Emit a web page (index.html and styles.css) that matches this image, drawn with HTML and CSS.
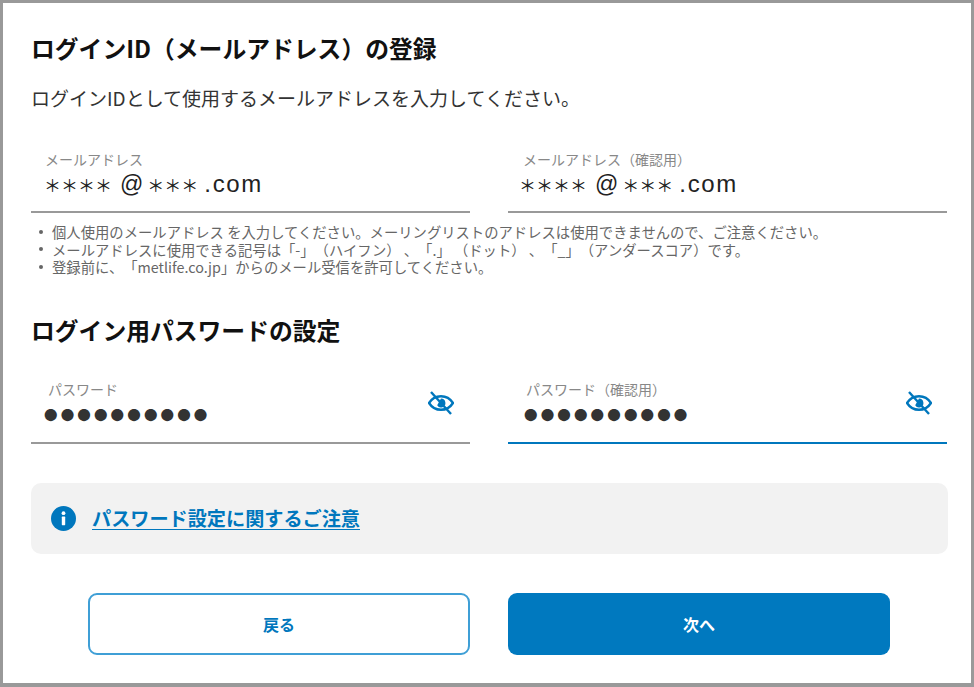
FILE: index.html
```html
<!DOCTYPE html>
<html lang="ja">
<head>
<meta charset="utf-8">
<title>ログインIDの登録</title>
<link rel="stylesheet" href="styles.css">
</head>
<body>
<main class="frame">
  <h1 class="title">ログインID（メールアドレス）の登録</h1>
  <p class="lead">ログインIDとして使用するメールアドレスを入力してください。</p>
  <div class="row row-email">
    <div class="field">
      <div class="label">メールアドレス</div>
      <div class="value value-mail"><span class="stars">＊＊＊＊</span><span class="at">@</span><span class="stars">＊＊＊</span><span class="dom">.com</span></div>
    </div>
    <div class="field">
      <div class="label">メールアドレス（確認用）</div>
      <div class="value value-mail value-right"><span class="stars">＊＊＊＊</span><span class="at">@</span><span class="stars">＊＊＊</span><span class="dom">.com</span></div>
    </div>
  </div>
  <ul class="notes">
    <li>個人使用のメールアドレス を入力してください。メーリングリストのアドレスは使用できませんので、ご注意ください。</li>
    <li>メールアドレスに使用できる記号は「-」（ハイフン） 、「.」 （ドット） 、「_」（アンダースコア）です。</li>
    <li>登録前に、「metlife.co.jp」からのメール受信を許可してください。</li>
  </ul>
  <h2 class="title title-pw">ログイン用パスワードの設定</h2>
  <div class="row row-pw">
    <div class="field field-pw">
      <div class="label">パスワード</div>
      <div class="value value-dots">●●●●●●●●●●</div>
      <svg class="eye" viewBox="0 0 26 24" aria-hidden="true"><path d="M1 12C3.8 7.6 8 5.2 13 5.2S22.2 7.6 25 12C22.2 16.4 18 18.8 13 18.8S3.8 16.4 1 12Z"/><path class="pupil" d="M13 7.6a4.4 4.4 0 1 1-3.8 6.6Z"/><path d="M3 1 23 23"/></svg>
    </div>
    <div class="field field-pw field-active">
      <div class="label">パスワード（確認用）</div>
      <div class="value value-dots">●●●●●●●●●●</div>
      <svg class="eye" viewBox="0 0 26 24" aria-hidden="true"><path d="M1 12C3.8 7.6 8 5.2 13 5.2S22.2 7.6 25 12C22.2 16.4 18 18.8 13 18.8S3.8 16.4 1 12Z"/><path class="pupil" d="M13 7.6a4.4 4.4 0 1 1-3.8 6.6Z"/><path d="M3 1 23 23"/></svg>
    </div>
  </div>
  <div class="info">
    <svg class="info-icon" viewBox="0 0 25 25" aria-hidden="true"><circle cx="12.5" cy="12.5" r="12.5"/><circle class="i" cx="12.5" cy="7.2" r="1.9"/><rect class="i" x="10.8" y="10.6" width="3.4" height="8.6" rx=".6"/></svg>
    <a class="info-link" href="#">パスワード設定に関するご注意</a>
  </div>
  <div class="buttons">
    <button class="btn btn-back" type="button">戻る</button>
    <button class="btn btn-next" type="button">次へ</button>
  </div>
</main>
</body>
</html>
```
FILE: styles.css
```css
* { box-sizing: border-box; }
html, body { margin: 0; padding: 0; background: #fff; }
body { width: 974px; height: 687px; overflow: hidden; font-family: "Noto Sans CJK JP", "Noto Sans", sans-serif; text-spacing-trim: space-all; }
.frame {
  width: 974px; height: 687px;
  border: solid #999;
  border-width: 3px 3px 4px 3px;
  padding: 27px 24px 0 28px;
  background: #fff;
}
.title { margin: 0; font-size: 23.8px; line-height: 36px; font-weight: 700; color: #111; }
.lead { margin: 18px 0 0; font-size: 19px; line-height: 28px; color: #333; }
.row { display: grid; grid-template-columns: 439px 439px; column-gap: 38px; }
.row-email { margin-top: 37px; }
.field { position: relative; height: 64px; border-bottom: 2px solid #999; padding-left: 14px; }
.label { font-size: 14px; line-height: 20px; color: #888; }
.value { color: #222; white-space: nowrap; }
.value-mail { margin-top: 1px; margin-left: -1px; height: 28px; display: flex; align-items: center; font-family: "Liberation Sans", sans-serif; }
.value-right { margin-left: -4px; }
.row .field:nth-child(2) { padding-left: 15px; }
.stars { font-family: "Noto Sans CJK JP", sans-serif; font-size: 17px; }
.at { font-size: 23px; margin: 0 4px 0 8px; }
.dom { font-size: 24px; letter-spacing: 1.6px; margin-left: 6px; }
.notes { margin: 10px 0 0; padding: 0 0 0 8px; list-style: none; font-size: 14.34px; line-height: 17.5px; color: #666; }
.notes li { display: flex; align-items: center; white-space: nowrap; }
.notes li::before { content: ""; flex: none; width: 4px; height: 4px; margin-right: 9px; border-radius: 50%; background: #666; }
.title-pw { margin-top: 36px; }
.row-pw { margin-top: 31px; }
.field-pw { height: 65px; }
.field-pw .label { padding-left: 3px; }
.row-pw .field:nth-child(2) { padding-left: 17px; }
.row-pw .field:nth-child(2) .label { padding-left: 1px; }
.value-dots { margin-top: 3px; margin-left: -1px; font-size: 13.5px; line-height: 24px; color: #333; letter-spacing: 3.15px; }
.field-active { border-bottom-color: #0077bd; }
.eye { position: absolute; right: 16px; top: 12px; width: 26px; height: 24px; fill: none; stroke: #0077bd; stroke-width: 2.4; }
.field-active .eye { right: 15px; }
.eye .pupil { fill: #0077bd; stroke: none; }
.info {
  margin-top: 39px; width: 917px; height: 71px;
  display: flex; align-items: center; gap: 16px;
  padding-left: 20px;
  background: #f2f2f2; border-radius: 10px;
}
.info-icon { width: 25px; height: 25px; flex: none; fill: #0077bd; }
.info-icon .i { fill: #fff; }
.info-link { font-size: 19.15px; line-height: 28px; font-weight: 700; color: #0077bd; text-decoration: underline; text-underline-offset: 3px; }
.buttons { margin-top: 39px; margin-left: 57px; display: flex; gap: 38px; }
.btn { width: 382px; height: 62px; border-radius: 9px; font-family: inherit; font-size: 16px; font-weight: 700; padding: 0; }
.btn-back { background: #fff; color: #0077bd; border: 2px solid #3f9fd6; }
.btn-next { background: #0079bf; color: #fff; border: 0; }
```
